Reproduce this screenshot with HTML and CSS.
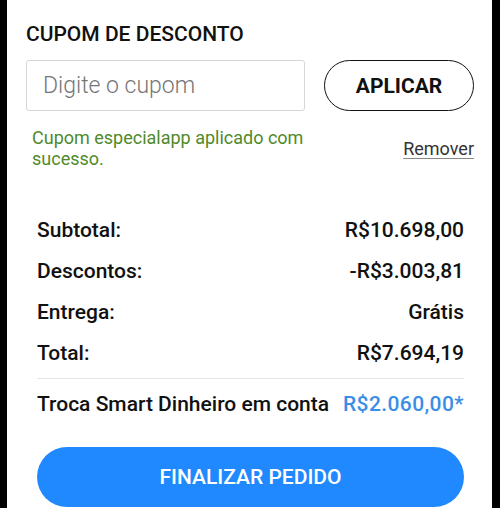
FILE: index.html
```html
<!DOCTYPE html>
<html lang="pt-BR">
<head>
  <meta charset="UTF-8">
  <meta name="viewport" content="width=device-width, initial-scale=1">
  <title>Cupom de desconto</title>
  <link rel="stylesheet" href="styles.css">
</head>
<body>

<div class="panel">
  <h2 class="section-title">CUPOM DE DESCONTO</h2>

  <form class="coupon-form">
    <input class="coupon-input" type="text" name="cupom" placeholder="Digite o cupom">
    <button class="btn-outline" type="button">APLICAR</button>
  </form>

  <div class="coupon-status">
    <p class="coupon-success">Cupom especialapp aplicado com sucesso.</p>
    <a class="coupon-remove" href="#">Remover</a>
  </div>

  <div class="summary">
    <div class="summary-row">
      <span>Subtotal:</span>
      <span>R$10.698,00</span>
    </div>
    <div class="summary-row">
      <span>Descontos:</span>
      <span>-R$3.003,81</span>
    </div>
    <div class="summary-row">
      <span>Entrega:</span>
      <span>Grátis</span>
    </div>
    <div class="summary-row">
      <span>Total:</span>
      <span>R$7.694,19</span>
    </div>
    <div class="summary-row trade-row">
      <span>Troca Smart Dinheiro em conta</span>
      <span class="trade-value">R$2.060,00*</span>
    </div>

    <button class="btn-primary" type="button">FINALIZAR PEDIDO</button>
  </div>
</div>

</body>
</html>
```

FILE: styles.css
```css
body {
  margin: 0;
  background-color: #000;
  font-family: Roboto, "Open Sans", Arial, sans-serif;
  color: #111;
}

.panel {
  margin: 0 8px 0 7px;
  height: 508px;
  overflow: hidden;
  background: #fff;
  padding: 22px 18px 0 19px;
  box-sizing: border-box;
}

.section-title {
  margin: 0;
  font-size: 21px;
  line-height: 24px;
  font-weight: 500;
}

.coupon-form {
  display: flex;
  gap: 19px;
  margin-top: 14px;
  height: 51px;
}

.coupon-input {
  width: 279px;
  box-sizing: border-box;
  padding: 0 16px;
  border: 1px solid #d6d6d6;
  border-radius: 3px;
  font-family: inherit;
  font-size: 23px;
  font-weight: 300;
  color: #111;
}

.coupon-input::placeholder {
  color: #767676;
}

.btn-outline {
  flex: 1;
  background: #fff;
  border: 1.5px solid #111;
  border-radius: 26px;
  font-family: inherit;
  font-size: 21px;
  font-weight: 700;
  color: #111;
  cursor: pointer;
}

.coupon-status {
  display: flex;
  justify-content: space-between;
  align-items: center;
  margin-top: 16px;
  padding-left: 6px;
}

.coupon-success {
  margin: 0;
  width: 290px;
  font-size: 18px;
  line-height: 21px;
  color: #4f8a2b;
}

.coupon-remove {
  font-size: 18px;
  color: #333;
  text-decoration: underline;
  text-underline-offset: 3px;
  text-decoration-color: #888;
}

.summary {
  margin-top: 41px;
  padding: 0 10px 0 11px;
}

.summary-row {
  display: flex;
  justify-content: space-between;
  font-size: 21px;
  line-height: 41px;
  font-weight: 500;
}

.trade-row {
  margin-top: 4px;
  padding-top: 5px;
  border-top: 1px solid #e4e4e4;
}

.trade-value {
  color: #3a8ee6;
  letter-spacing: 0.4px;
}

.btn-primary {
  display: block;
  width: 100%;
  height: 60px;
  margin-top: 22px;
  border: none;
  border-radius: 30px;
  background-color: #2189ff;
  color: #fff;
  font-family: inherit;
  font-size: 21px;
  font-weight: 500;
  cursor: pointer;
}
```
